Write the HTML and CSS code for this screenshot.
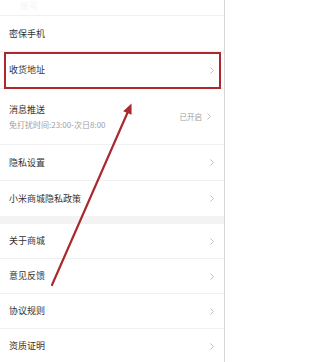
FILE: index.html
```html
<!DOCTYPE html>
<html lang="zh">
<head>
<meta charset="utf-8">
<link rel="stylesheet" href="styles.css">
</head>
<body>
<div class="page">
  <div class="list">
    <div class="row row-top"><span class="ghost">账号</span></div>
    <div class="row h36"><span class="title">密保手机</span></div>
    <div class="row h37"><span class="title">收货地址</span><svg class="chev" viewBox="0 0 4 7"><polyline points="0.5,0.5 3.5,3.5 0.5,6.5"/></svg></div>
    <div class="row h56">
      <div class="two">
        <span class="title">消息推送</span>
        <span class="sub">免打扰时间:23:00-次日8:00</span>
      </div>
      <span class="state">已开启</span><svg class="chev" viewBox="0 0 4 7"><polyline points="0.5,0.5 3.5,3.5 0.5,6.5"/></svg>
    </div>
    <div class="row h36"><span class="title">隐私设置</span><svg class="chev" viewBox="0 0 4 7"><polyline points="0.5,0.5 3.5,3.5 0.5,6.5"/></svg></div>
    <div class="row h35 last"><span class="title">小米商城隐私政策</span><svg class="chev" viewBox="0 0 4 7"><polyline points="0.5,0.5 3.5,3.5 0.5,6.5"/></svg></div>
    <div class="gap"></div>
    <div class="row h35"><span class="title">关于商城</span><svg class="chev" viewBox="0 0 4 7"><polyline points="0.5,0.5 3.5,3.5 0.5,6.5"/></svg></div>
    <div class="row h35"><span class="title">意见反馈</span><svg class="chev" viewBox="0 0 4 7"><polyline points="0.5,0.5 3.5,3.5 0.5,6.5"/></svg></div>
    <div class="row h35"><span class="title">协议规则</span><svg class="chev" viewBox="0 0 4 7"><polyline points="0.5,0.5 3.5,3.5 0.5,6.5"/></svg></div>
    <div class="row h35"><span class="title">资质证明</span><svg class="chev" viewBox="0 0 4 7"><polyline points="0.5,0.5 3.5,3.5 0.5,6.5"/></svg></div>
  </div>
  <div class="highlight"></div>
  <svg class="arrow" viewBox="0 0 226 362" width="226" height="362">
    <line x1="52" y1="285" x2="127.8" y2="112" />
    <polygon points="131.5,103.5 123.2,111.2 131.6,114.8" />
  </svg>
</div>
</body>
</html>
```
FILE: styles.css
```css
html, body {
  margin: 0;
  padding: 0;
  background: #ffffff;
}
body {
  width: 226px;
  height: 362px;
  overflow: hidden;
  font-family: "Noto Sans CJK SC", "Noto Sans", sans-serif;
}
.page {
  position: relative;
  width: 226px;
  height: 362px;
  overflow: hidden;
}
.list {
  width: 224px;
  border-right: 1px solid #d6d6d6;
  display: flex;
  flex-direction: column;
}
.row {
  box-sizing: border-box;
  display: flex;
  align-items: center;
  padding: 0 10px 0 9px;
  border-bottom: 1px solid #f0f0f0;
  flex-shrink: 0;
}
.row.last { border-bottom: none; }
.row-top { height: 16px; align-items: flex-start; }
.h35 { height: 35px; }
.h36 { height: 36px; }
.h37 { height: 37px; }
.h56 { height: 56px; }
.ghost {
  font-size: 9px;
  color: #f5f5f5;
  margin-left: 11px;
  line-height: 12px;
  margin-top: 0;
}
.title {
  font-size: 9px;
  line-height: 12px;
  color: #333333;
}
.two {
  display: flex;
  flex-direction: column;
  gap: 3px;
  margin-top: 1px;
}
.sub {
  font-size: 8px;
  line-height: 12px;
  color: #a0a0a0;
}
.state {
  margin-left: auto;
  font-size: 7.5px;
  color: #a0a0a0;
  margin-right: 5px;
}
.chev {
  width: 4px;
  height: 7px;
  margin-left: auto;
  fill: none;
  stroke: #b8b8b8;
  stroke-width: 0.9;
}
.state + .chev { margin-left: 0; margin-right: 3px; }
.gap {
  height: 8px;
  background: #f3f3f3;
  flex-shrink: 0;
}
.highlight {
  position: absolute;
  left: 4px;
  top: 52px;
  width: 217px;
  height: 37px;
  box-sizing: border-box;
  border: 2.5px solid #ad272b;
}
.arrow {
  position: absolute;
  left: 0;
  top: 0;
  pointer-events: none;
}
.arrow line {
  stroke: #a92a2d;
  stroke-width: 2.2;
  stroke-linecap: round;
}
.arrow polygon {
  fill: #a92a2d;
}
```
